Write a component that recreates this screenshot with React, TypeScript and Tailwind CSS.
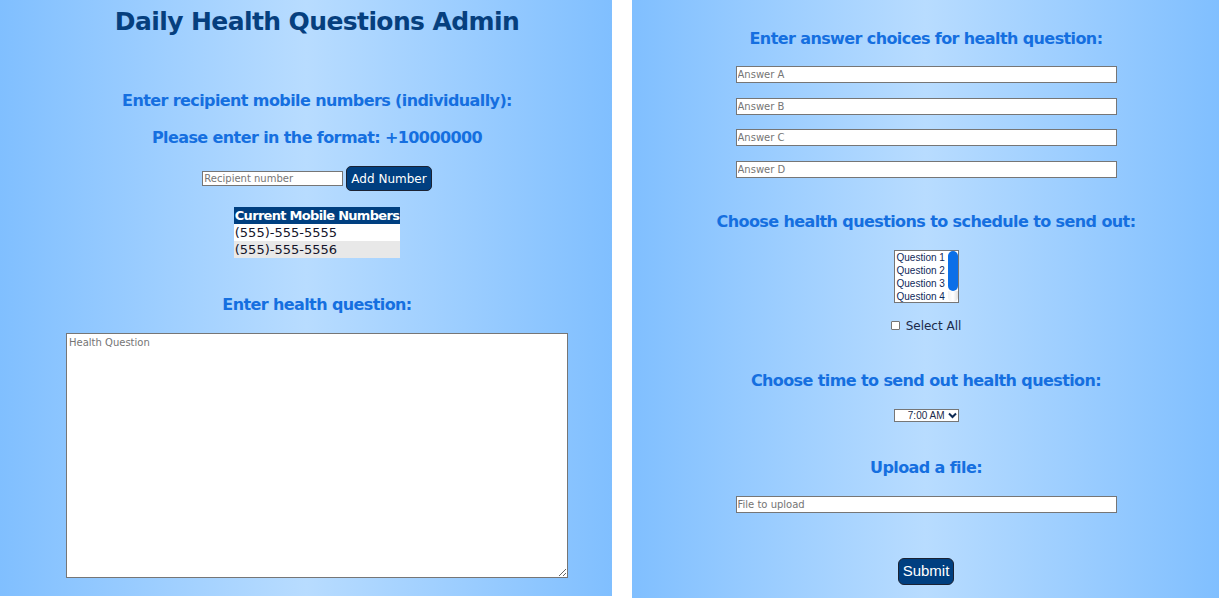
import { useState } from "react"

const numbers = ["(555)-555-5555", "(555)-555-5556"]
const answers = ["Answer A", "Answer B", "Answer C", "Answer D"]
const questions = ["Question 1", "Question 2", "Question 3", "Question 4"]

const panel =
  "bg-[linear-gradient(to_right,#80bfff,#b8dcff,#80bfff)] flex flex-col items-center font-['DejaVu_Sans',Verdana,sans-serif]"
const heading = "text-[16px] leading-[22px] font-bold tracking-[-0.6px] text-[#156fe0]"
const field =
  "h-[17px] w-[381px] bg-white border border-[#767676] px-[1px] text-[10px] text-[#222] placeholder:text-[#757575] outline-none"

export default function App() {
  const [selectAll, setSelectAll] = useState(false)

  return (
    <div className="flex w-[1219px] h-[598px] bg-white overflow-hidden">
      {/* Left column */}
      <div className={`${panel} w-[612px] h-[596px] shrink-0 pl-[22px]`}>
        <h1 className="mt-[5px] text-[25px] leading-[34px] font-bold tracking-[-0.6px] text-[#063f7e]">
          Daily Health Questions Admin
        </h1>
        <h2 className={`${heading} mt-[51px]`}>Enter recipient mobile numbers (individually):</h2>
        <h2 className={`${heading} mt-[15px]`}>Please enter in the format: +10000000</h2>

        <div className="mt-[17px] flex items-center gap-[3px]">
          <input
            placeholder="Recipient number"
            className="h-[15px] w-[141px] bg-white border border-[#767676] px-[1px] text-[10px] placeholder:text-[#757575] outline-none"
          />
          <button className="h-[25px] px-[4px] rounded-[5px] bg-[#003f80] border border-[#1b2233] text-white text-[12px]">
            Add Number
          </button>
        </div>

        <table className="mt-[16px] w-[166px] text-[13px] leading-[17px] border-collapse">
          <thead>
            <tr className="bg-[#003f80] text-white">
              <th className="text-left font-bold px-[1px] whitespace-nowrap tracking-[-0.7px]">Current Mobile Numbers</th>
            </tr>
          </thead>
          <tbody className="text-[#14142a]">
            {numbers.map((n, i) => (
              <tr key={n} className={i % 2 === 0 ? "bg-white" : "bg-[#e8e8e8]"}>
                <td className="px-[1px]">{n}</td>
              </tr>
            ))}
          </tbody>
        </table>

        <h2 className={`${heading} mt-[36px]`}>Enter health question:</h2>

        <textarea
          placeholder="Health Question"
          className="mt-[17px] h-[245px] w-[502px] bg-white border border-[#767676] px-[2px] py-[1px] text-[10px] placeholder:text-[#757575] outline-none"
        />
      </div>

      <div className="w-[20px] shrink-0" />

      {/* Right column */}
      <div className={`${panel} flex-1 h-[598px] pl-[1px]`}>
        <h2 className={`${heading} mt-[28px]`}>Enter answer choices for health question:</h2>
        <div className="mt-[16px] flex flex-col gap-[14.6px]">
          {answers.map((a) => (
            <input key={a} placeholder={a} className={field} />
          ))}
        </div>

        <h2 className={`${heading} mt-[33px]`}>Choose health questions to schedule to send out:</h2>

        {/* Question listbox */}
        <div className="mt-[17px] flex h-[53px] w-[65px] bg-white border border-[#767676] font-['Liberation_Sans',Arial,sans-serif]">
          <div className="flex-1 pl-[2px] text-[10px] leading-[13px] text-[#0f2a5a]">
            {questions.map((q) => (
              <div key={q}>{q}</div>
            ))}
          </div>
          <div className="w-[10px] flex flex-col bg-white">
            <div className="h-[40px] rounded-[5px] bg-[#0a6fe8]" />
            <div className="flex-1 rounded-b-[5px] bg-[linear-gradient(to_right,#f2f2f2,#ffffff,#e0e0e0)]" />
          </div>
        </div>

        <label className="mt-[15px] flex items-center gap-[6px] text-[12px] leading-[16px] text-[#1b2a4a]">
          <input
            type="checkbox"
            checked={selectAll}
            onChange={(e) => setSelectAll(e.target.checked)}
            className="w-[9px] h-[9px] appearance-none bg-white border border-[#767676] rounded-[1px]"
          />
          Select All
        </label>

        <h2 className={`${heading} mt-[36px]`}>Choose time to send out health question:</h2>

        {/* Time select */}
        <div className="mt-[17px] h-[13px] w-[65px] bg-white border border-[#767676] flex items-center justify-end pr-[1px] gap-[3px] font-['Liberation_Sans',Arial,sans-serif] text-[10px] leading-[11px] text-[#1b2a4a]">
          <span>7:00 AM</span>
          <svg width="9" height="7" viewBox="0 0 9 7" className="shrink-0">
            <path d="M1 1.5 L4.5 5 L8 1.5" fill="none" stroke="#0d2a55" strokeWidth="2" />
          </svg>
        </div>

        <h2 className={`${heading} mt-[35px]`}>Upload a file:</h2>
        <input placeholder="File to upload" className={`${field} mt-[17px]`} />

        <button className="mt-[45px] h-[27px] px-[4px] rounded-[6px] bg-[#003f80] border border-[#1b2233] text-white text-[15px] font-['Liberation_Sans',Arial,sans-serif]">
          Submit
        </button>
      </div>
    </div>
  )
}
